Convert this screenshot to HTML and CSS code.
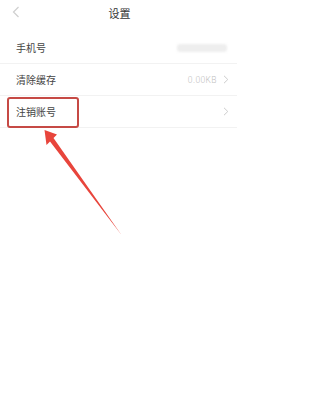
FILE: index.html
```html
<!DOCTYPE html>
<html lang="zh">
<head>
<meta charset="utf-8">
<link rel="stylesheet" href="styles.css">
</head>
<body>
<div class="page">
  <header class="nav">
    <svg class="back" width="8" height="12" viewBox="0 0 8 12"><path d="M6.5 1 L1.5 6 L6.5 11" fill="none" stroke="#cfcfcf" stroke-width="1.2"/></svg>
    <div class="title">设置</div>
  </header>
  <div class="list">
    <div class="row">
      <span class="label">手机号</span>
      <span class="phone"></span>
    </div>
    <div class="row">
      <span class="label">清除缓存</span>
      <span class="right"><span class="value">0.00KB</span><svg class="chev" width="6" height="9" viewBox="0 0 6 9"><path d="M1 0.8 L4.8 4.5 L1 8.2" fill="none" stroke="#cccccc" stroke-width="1"/></svg></span>
    </div>
    <div class="row">
      <span class="label">注销账号</span>
      <span class="right"><svg class="chev" width="6" height="9" viewBox="0 0 6 9"><path d="M1 0.8 L4.8 4.5 L1 8.2" fill="none" stroke="#cccccc" stroke-width="1"/></svg></span>
    </div>
  </div>
  <div class="highlight"></div>
  <svg class="arrow" width="237" height="411" viewBox="0 0 237 411">
    <polygon points="44.5,130 57,134.5 53.5,138 121.5,235 50,141.5 46.5,145" fill="#e8453c"/>
  </svg>
</div>
</body>
</html>
```
FILE: styles.css
```css
html, body {
  margin: 0;
  padding: 0;
  background: #ffffff;
}
.page {
  position: relative;
  width: 237px;
  height: 411px;
  font-family: "Noto Sans CJK SC", "Noto Sans", sans-serif;
  overflow: hidden;
}
.nav {
  height: 29px;
  display: flex;
  align-items: center;
  justify-content: center;
  position: relative;
}
.back {
  position: absolute;
  left: 12px;
  top: 6px;
}
.title {
  font-size: 11px;
  color: #333333;
  margin-left: 2px;
  margin-top: -4px;
}
.list {
  display: flex;
  flex-direction: column;
  margin-top: 3px;
}
.row {
  height: 31px;
  display: flex;
  align-items: center;
  justify-content: space-between;
  padding: 0 8px 0 16px;
  border-bottom: 1px solid #f2f2f2;
}
.label {
  font-size: 10px;
  color: #444444;
}
.phone {
  width: 50px;
  height: 8px;
  background: #eeeeee;
  border-radius: 3px;
  filter: blur(1px);
  margin-right: 2px;
}
.right {
  display: flex;
  align-items: center;
  gap: 6px;
}
.value {
  font-family: "Roboto", "Noto Sans", sans-serif;
  font-weight: 300;
  font-size: 8.5px;
  color: #c2c2c2;
  letter-spacing: 0.4px;
}
.chev {
  display: block;
}
.highlight {
  position: absolute;
  left: 7px;
  top: 97px;
  width: 68px;
  height: 27px;
  border: 2px solid #c64a45;
  border-radius: 3px;
}
.arrow {
  position: absolute;
  left: 0;
  top: 0;
}
```
